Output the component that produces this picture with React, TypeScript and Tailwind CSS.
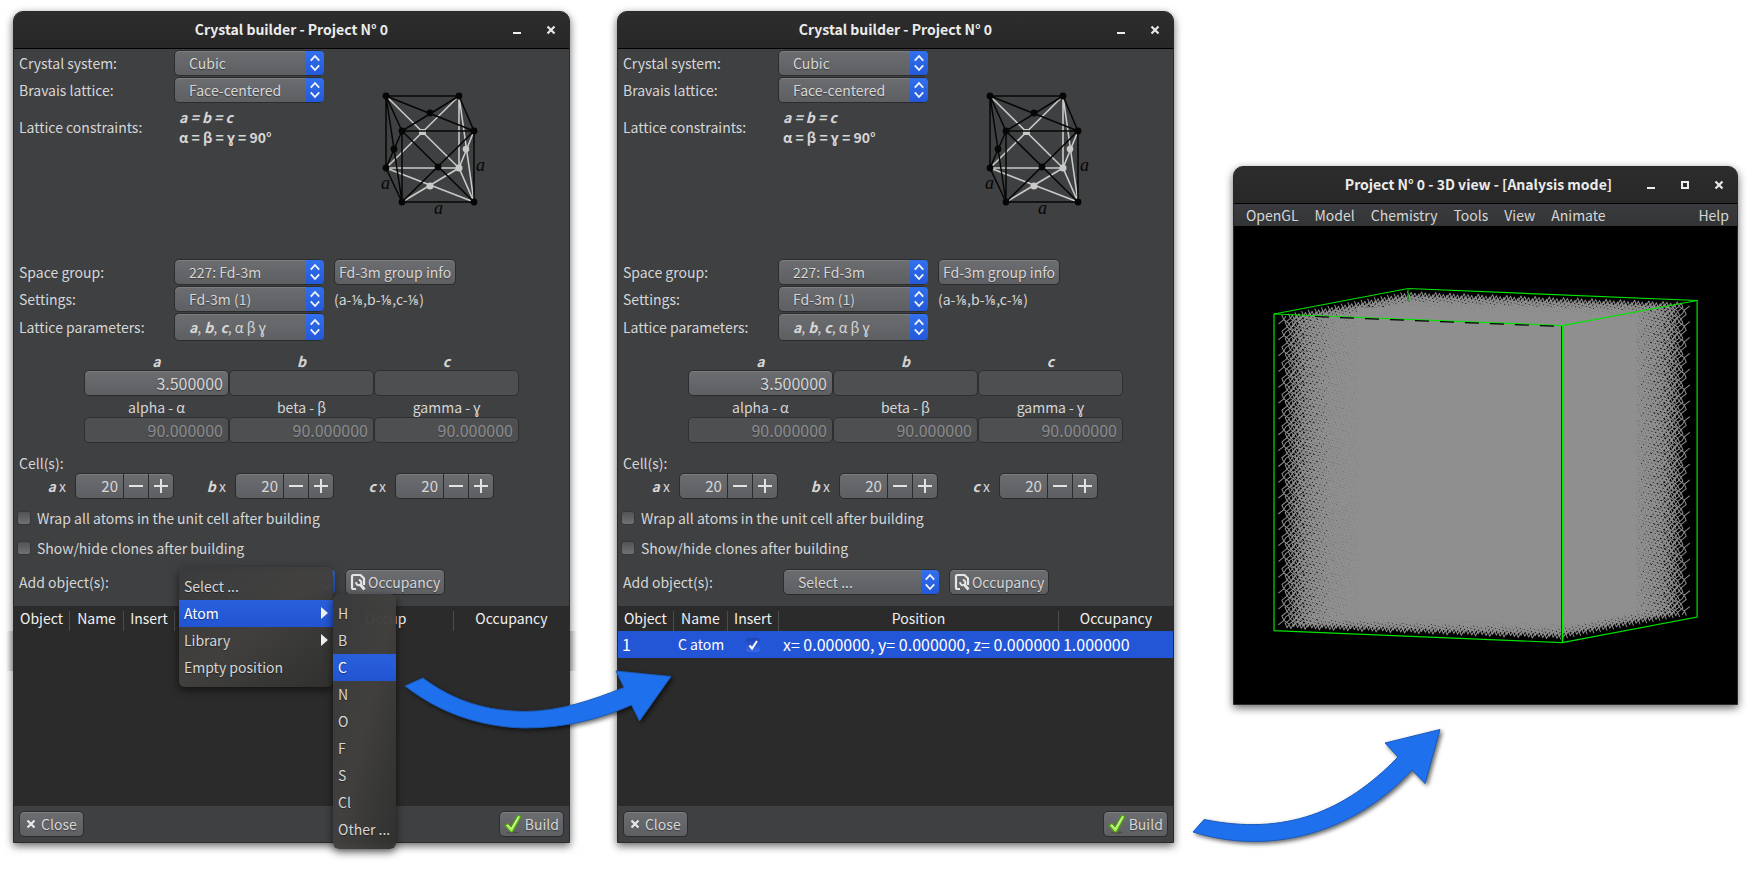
import { useMemo, type ReactNode } from 'react';
import clsx from 'clsx';

const raised =
  'border border-[#2b2c2d] bg-linear-to-b from-[#6c6d70] to-[#5e5f62] shadow-[inset_0_1px_#7d7e80] [text-shadow:0_1px_1px_#0006]';
const sunken = 'border border-[#2e2f30] bg-[#4e4f51] [text-shadow:0_1px_1px_#0004]';

function TitleBar({ title, maximize = false }: { title: string; maximize?: boolean }) {
  return (
    <header className="relative flex h-[37px] items-center justify-end rounded-t-[9px] border-b border-black bg-linear-to-b from-[#2d2d2d] to-[#272727] pr-1">
      <h1
        className={clsx(
          'absolute inset-x-0 top-[7px] text-center text-[14px] leading-5 font-bold text-[#ececec]',
          maximize && 'pr-[14px]',
        )}
      >
        {title}
      </h1>
      <div className="relative flex gap-[6px]">
        <button aria-label="Minimize" className="grid size-7 place-items-center">
          <svg width="10" height="10" viewBox="0 0 10 10">
            <path d="M1 8h8" stroke="#eee" strokeWidth="2" />
          </svg>
        </button>
        {maximize && (
          <button aria-label="Maximize" className="grid size-7 place-items-center">
            <svg width="10" height="10" viewBox="0 0 10 10">
              <path d="M2 2h6v6H2z" stroke="#eee" strokeWidth="2" fill="none" />
            </svg>
          </button>
        )}
        <button aria-label="Close window" className="grid size-7 place-items-center">
          <CrossIcon />
        </button>
      </div>
    </header>
  );
}

function CrossIcon() {
  return (
    <svg width="10" height="10" viewBox="0 0 10 10">
      <path d="M1.5 1.5l7 7M8.5 1.5l-7 7" stroke="#e8e8e8" strokeWidth="2.2" />
    </svg>
  );
}

function Combo({
  id,
  value,
  children,
  wide = false,
  tall = false,
}: {
  id: string;
  value: string;
  children?: ReactNode;
  wide?: boolean;
  tall?: boolean;
}) {
  return (
    <div className={clsx('relative shrink-0', wide ? 'w-[156px]' : 'w-[150px]', tall ? 'h-[28px]' : 'h-[26px]')}>
      <select
        id={id}
        className={clsx(
          'size-full appearance-none rounded-[5px] pb-px pl-[14px] text-[14px] leading-5 outline-none',
          raised,
          children && 'text-transparent [text-shadow:none]',
        )}
      >
        <option>{value}</option>
      </select>
      {children && (
        <span className="pointer-events-none absolute inset-0 flex items-center pl-[15px] leading-5 whitespace-pre">
          {children}
        </span>
      )}
      <span className="pointer-events-none absolute inset-y-px right-0 grid w-[18px] place-items-center rounded-r-[4px] bg-linear-to-b from-[#3270ee] to-[#2459d8]">
        <svg width="12" height="18" viewBox="0 0 12 18" fill="none" stroke="#f4f6ff" strokeWidth="1.8">
          <path d="M1.8 6.6L6 2l4.2 4.6M1.8 11.4L6 16l4.2-4.6" />
        </svg>
      </span>
    </div>
  );
}

function FieldRow({ label, htmlFor, children }: { label: string; htmlFor?: string; children: ReactNode }) {
  return (
    <div className="flex items-center pl-[5px]">
      <label htmlFor={htmlFor} className="w-[155px] shrink-0">
        {label}
      </label>
      {children}
    </div>
  );
}

function LatticeDiagram() {
  const dark = '#060606';
  const light = '#c9c9c9';
  return (
    <svg width="110" height="130" viewBox="380 90 110 130" className="mt-[41px] ml-[56px] shrink-0" role="img" aria-label="Face-centered cubic cell">
      <g stroke={light} strokeWidth="1.6" fill="none">
        <path d="M386 96L459 168M459 96L386 168M386 168H459V96M386 168L474 202M402 202L459 168L474 202M459 96L474 202M459 168L474 131" />
      </g>
      <g fill={light}>
        <rect x="419" y="129" width="7" height="6" rx="1" />
        <circle cx="459" cy="168" r="3.5" />
        <circle cx="466" cy="149" r="3.3" />
        <circle cx="430" cy="186" r="3.5" />
      </g>
      <g stroke={dark} strokeWidth="1.5" fill="none">
        <path d="M386 96H459L474 131H402ZM386 96L474 131M459 96L402 131M386 96V168L402 202V131M386 96L402 202M386 168L402 131M402 131L474 202M474 131L402 202H474V131" />
      </g>
      <g fill={dark}>
        <circle cx="386" cy="96" r="3.4" />
        <circle cx="459" cy="96" r="3.4" />
        <circle cx="430" cy="113" r="3.4" />
        <circle cx="402" cy="131" r="3.4" />
        <circle cx="474" cy="131" r="3.4" />
        <circle cx="394" cy="149" r="3.4" />
        <circle cx="438" cy="167" r="3.4" />
        <circle cx="386" cy="168" r="3.4" />
        <circle cx="402" cy="202" r="3.4" />
        <circle cx="474" cy="202" r="3.4" />
        <g fontFamily="Liberation Serif, serif" fontStyle="italic" fontSize="18">
          <text x="381" y="189">a</text>
          <text x="434" y="214">a</text>
          <text x="476" y="171">a</text>
        </g>
      </g>
    </svg>
  );
}

function Spinner({ axis, prefix }: { axis: string; prefix: string }) {
  const id = `${prefix}-cells-${axis}`;
  return (
    <div className="flex items-center">
      <label htmlFor={id} className="w-[61px] pr-[9px] text-right">
        <b className="italic">{axis}</b> x
      </label>
      <div className={clsx('flex h-[26px] w-[99px] rounded-[5px]', raised)}>
        <input
          id={id}
          defaultValue="20"
          className="w-[47px] bg-transparent pr-[5px] text-right text-[15px] leading-5 outline-none"
        />
        <button aria-label={`Fewer ${axis} cells`} className="grid w-[25px] place-items-center border-l border-[#2b2c2d]">
          <svg width="14" height="14" viewBox="0 0 14 14">
            <path d="M0 7h14" stroke="#e2e2e2" strokeWidth="2" />
          </svg>
        </button>
        <button aria-label={`More ${axis} cells`} className="grid w-[25px] place-items-center border-l border-[#2b2c2d]">
          <svg width="14" height="14" viewBox="0 0 14 14">
            <path d="M0 7h14M7 0v14" stroke="#e2e2e2" strokeWidth="2" />
          </svg>
        </button>
      </div>
    </div>
  );
}

function Tick({ id, label }: { id: string; label: string }) {
  return (
    <div className="flex h-[30px] items-center gap-[6px] pl-[3px]">
      <input
        id={id}
        type="checkbox"
        className="size-[14px] appearance-none rounded-[3px] border border-[#37383a] bg-linear-to-b from-[#525355] to-[#707173]"
      />
      <label htmlFor={id}>{label}</label>
    </div>
  );
}

function OccupancyIcon() {
  return (
    <svg width="16" height="18" viewBox="0 0 16 18" fill="none" stroke="#e6e6e6">
      <path d="M6 16H3.500Q2 16 2 14.500V3.500Q2 2 3.500 2H10.500L14 5.500V12" strokeWidth="2.200" />
      <path d="M6.200 9.200A2.600 2.600 0 1 0 8.800 7" strokeWidth="2" />
      <path d="M10.300 11.500L14.500 16.500" strokeWidth="2.800" />
    </svg>
  );
}

function CheckIcon() {
  return (
    <svg width="18" height="20" viewBox="0 0 18 20">
      <ellipse cx="9" cy="18.500" rx="6" ry="1" fill="#0003" />
      <path d="M1 11.500L4 9.500L7 13L14 1L17 2.500L8.500 18H6.500Z" fill="#a4ec55" stroke="#4f9d10" strokeWidth="1.200" strokeLinejoin="round" />
      <path d="M3 11.500L4 11L7.300 15L14.500 2.700" fill="none" stroke="#d9fbb0" strokeWidth="1" />
    </svg>
  );
}

const menuPanel =
  'absolute rounded-[6px] bg-linear-to-br from-[#393a3cf8] via-[#41403ef8] to-[#30302ff8] py-[6px] shadow-[0_3px_8px_#0009]';

function MenuItem({ children, active = false, submenu = false }: { children: ReactNode; active?: boolean; submenu?: boolean }) {
  return (
    <button
      role="menuitem"
      className={clsx(
        'flex h-[27px] w-full items-center justify-between pr-[5px] pb-[2px] pl-[5px] text-left leading-5 [text-shadow:0_1px_1px_#0006]',
        active && 'bg-linear-to-b from-[#2a60dc] to-[#2254d2] text-white',
      )}
    >
      {children}
      {submenu && (
        <svg width="7" height="12" viewBox="0 0 7 12">
          <path d="M0 0l7 6-7 6z" fill="#f0f0f0" />
        </svg>
      )}
    </button>
  );
}

function AddMenu() {
  return (
    <>
      <div role="menu" className={clsx(menuPanel, 'top-[-2px] left-[165px] w-[154px]')}>
        <MenuItem>Select ...</MenuItem>
        <MenuItem active submenu>
          Atom
        </MenuItem>
        <MenuItem submenu>Library</MenuItem>
        <MenuItem>Empty position</MenuItem>
      </div>
      <div role="menu" className={clsx(menuPanel, 'top-[25px] left-[319px] z-10 w-[63px]')}>
        {['H', 'B', 'C', 'N', 'O', 'F', 'S', 'Cl', 'Other ...'].map((name) => (
          <MenuItem key={name} active={name === 'C'}>
            <span className="whitespace-nowrap">{name}</span>
          </MenuItem>
        ))}
      </div>
    </>
  );
}

function ObjectTable({ filled }: { filled: boolean }) {
  const heads = ['Object', 'Name', 'Insert', filled ? 'Position' : 'Occup', 'Occupancy'];
  return (
    <div className="h-[200px] bg-[#2b2b2b] text-[#f0f0f0]">
      <table className="w-full table-fixed border-collapse">
        <colgroup>
          <col className="w-[56px]" />
          <col className="w-[54px]" />
          <col className="w-[51px]" />
          <col className={filled ? 'w-[280px]' : 'w-[279px]'} />
          <col />
        </colgroup>
        <thead>
          <tr>
            {heads.map((h, i) => (
              <th key={h} className="h-[25px] p-0 pt-[5px] font-normal">
                <div
                  className={clsx(
                    'h-[20px] leading-[14px]',
                    i < 4 && 'border-r border-[#4b4c50]',
                    h === 'Occup' && 'pl-[190px] text-left',
                  )}
                >
                  {h}
                </div>
              </th>
            ))}
          </tr>
        </thead>
        {filled && (
          <tbody>
            <tr className="bg-[#2356d6] whitespace-nowrap text-white">
              <td className="h-[27px] p-0 pb-[2px] pl-[4px] text-[16px] leading-5">1</td>
              <td className="p-0 pb-[2px] pl-[4px] leading-5">C atom</td>
              <td className="p-0">
                <div className="relative mx-auto size-[14px]">
                  <input
                    type="checkbox"
                    defaultChecked
                    aria-label="Insert C atom"
                    className="block size-full appearance-none rounded-[3px] bg-linear-to-b from-[#1c44b4] to-[#3a68ea]"
                  />
                  <svg className="pointer-events-none absolute inset-0" viewBox="0 0 14 14">
                    <path d="M3.500 7.500L6 10.500L11 3" fill="none" stroke="#fff" strokeWidth="2" />
                  </svg>
                </div>
              </td>
              <td className="p-0 pb-[2px] pl-[4px] text-[16px] leading-5">x= 0.000000, y= 0.000000, z= 0.000000</td>
              <td className="p-0 pb-[2px] pl-[4px] text-[16px] leading-5">1.000000</td>
            </tr>
          </tbody>
        )}
      </table>
    </div>
  );
}

function BuilderWindow({ prefix, filled = false }: { prefix: string; filled?: boolean }) {
  const lengths = [
    ['a', '3.500000'],
    ['b', ''],
    ['c', ''],
  ];
  const angles = ['alpha - α', 'beta - β', 'gamma - ɣ'];
  return (
    <section className="min-w-0 flex-[557] rounded-t-[10px] border border-[#2a2a2a] bg-[#3f4042] shadow-[0_3px_9px_#0009]">
      <TitleBar title="Crystal builder - Project N° 0" />
      <div className="flex">
        <div className="flex flex-col gap-px pt-px">
          <FieldRow label="Crystal system:" htmlFor={`${prefix}-system`}>
            <Combo id={`${prefix}-system`} value="Cubic" />
          </FieldRow>
          <FieldRow label="Bravais lattice:" htmlFor={`${prefix}-lattice`}>
            <Combo id={`${prefix}-lattice`} value="Face-centered" />
          </FieldRow>
          <div className="flex items-center pt-[3px] pl-[5px]">
            <span className="w-[160px]">Lattice constraints:</span>
            <div className="leading-5 font-bold">
              <p className="italic">a = b = c</p>
              <p>α = β = ɣ = 90°</p>
            </div>
          </div>
        </div>
        <LatticeDiagram />
      </div>

      <div className="mt-[39px] flex flex-col gap-px">
        <FieldRow label="Space group:" htmlFor={`${prefix}-group`}>
          <Combo id={`${prefix}-group`} value="227: Fd-3m" />
          <button className={clsx('ml-[10px] h-[26px] rounded-[5px] px-[4px] leading-5', raised)}>Fd-3m group info</button>
        </FieldRow>
        <FieldRow label="Settings:" htmlFor={`${prefix}-settings`}>
          <Combo id={`${prefix}-settings`} value="Fd-3m (1)" />
          <span className="ml-[10px]">(a-⅛,b-⅛,c-⅛)</span>
        </FieldRow>
        <FieldRow label="Lattice parameters:" htmlFor={`${prefix}-params`}>
          <Combo id={`${prefix}-params`} value="a, b, c, α β ɣ" tall>
            <b className="italic">a</b>, <b className="italic">b</b>, <b className="italic">c</b>, α β ɣ
          </Combo>
        </FieldRow>
      </div>

      <div className="mt-[10px] ml-[70px] grid w-[435px] grid-cols-3 text-center">
        {lengths.map(([name, value]) => (
          <div key={name}>
            <label htmlFor={`${prefix}-${name}`} className="block h-[19px] leading-5 font-bold italic">
              {name}
            </label>
            <input
              id={`${prefix}-${name}`}
              defaultValue={value}
              disabled={!value}
              className={clsx(
                'block h-[26px] w-full rounded-[5px] px-[5px] text-right text-[16px] leading-5 outline-none',
                value ? raised : sunken,
              )}
            />
          </div>
        ))}
        {angles.map((name) => (
          <div key={name}>
            <label htmlFor={`${prefix}-${name}`} className="block h-[21px] leading-[22px]">
              {name}
            </label>
            <input
              id={`${prefix}-${name}`}
              defaultValue="90.000000"
              disabled
              className={clsx(
                'block h-[26px] w-full rounded-[5px] px-[5px] text-right text-[16px] leading-5 text-[#8b8c8e]',
                sunken,
              )}
            />
          </div>
        ))}
      </div>

      <p className="mt-[10px] pl-[5px] leading-5">Cell(s):</p>
      <div className="flex">
        <Spinner axis="a" prefix={prefix} />
        <Spinner axis="b" prefix={prefix} />
        <Spinner axis="c" prefix={prefix} />
      </div>
      <div className="mt-1">
        <Tick id={`${prefix}-wrap`} label="Wrap all atoms in the unit cell after building" />
        <Tick id={`${prefix}-clones`} label="Show/hide clones after building" />
      </div>

      <div className="relative mt-[6px] mb-[11px] flex items-center pl-[5px]">
        <label htmlFor={`${prefix}-add`} className="w-[160px]">
          Add object(s):
        </label>
        <Combo id={`${prefix}-add`} value="Select ..." wide />
        <button className={clsx('ml-[10px] flex h-[26px] items-center gap-[2px] rounded-[5px] px-[4px] leading-5', raised)}>
          <OccupancyIcon />
          Occupancy
        </button>
        {!filled && <AddMenu />}
      </div>

      <ObjectTable filled={filled} />

      <footer className="flex h-[36px] items-center justify-between px-[5px]">
        <button className={clsx('flex h-[26px] items-center gap-[5px] rounded-[5px] px-[6px] leading-5', raised)}>
          <CrossIcon />
          Close
        </button>
        <button className={clsx('flex h-[26px] items-center gap-[3px] rounded-[5px] px-[4px] leading-5', raised)}>
          <CheckIcon />
          Build
        </button>
      </footer>
    </section>
  );
}

const CELLS = 20;
const FCC = [
  [0, 0, 0],
  [0, 0.5, 0.5],
  [0.5, 0, 0.5],
  [0.5, 0.5, 0],
];
const BONDS = [
  [1, 1, 1],
  [1, -1, -1],
  [-1, 1, -1],
  [-1, -1, 1],
];

const tenth = (n: number) => Math.round(n * 10) / 10;

function project(x: number, y: number, z: number): [number, number] {
  return [
    tenth(1276 + (x * 284 + y * 132) / CELLS),
    tenth(314 + (x * 11 - y * 25 + z * 316.5) / CELLS),
  ];
}

function insideCore(x: number, y: number) {
  if (x < 1362 || x > 1632) return false;
  const top = 288 + (x - 1408) * 0.042 + 22;
  const bottom = x < 1562 ? 630 + (x - 1274) * 0.038 - 20 : 642 - (x - 1562) * 0.185 - 20;
  return y > top && y < bottom;
}

function buildBondPath() {
  const parts: string[] = [];
  for (let i = 0; i < CELLS; i++)
    for (let j = 0; j < CELLS; j++)
      for (let k = 0; k < CELLS; k++)
        for (const [fx, fy, fz] of FCC) {
          const cx = i + fx + 0.375;
          const cy = j + fy + 0.375;
          const cz = k + fz + 0.375;
          const [px, py] = project(cx, cy, cz);
          if (insideCore(px, py)) continue;
          for (const [bx, by, bz] of BONDS) {
            const nx = cx + bx / 4;
            const ny = cy + by / 4;
            const nz = cz + bz / 4;
            if (Math.max(nx, ny, nz) > CELLS) continue;
            const [qx, qy] = project(nx, ny, nz);
            parts.push(`M${px} ${py}L${qx} ${qy}`);
          }
        }
  return parts.join('');
}

function CrystalView() {
  const bonds = useMemo(buildBondPath, []);
  return (
    <svg viewBox="1234 226 503 478" className="block w-full bg-black" role="img" aria-label="3D view of the crystal">
      <path d="M1358 308L1408 306L1636 316V612L1562 624L1358 616Z" fill="#8f8f8f" />
      <path d={bonds} stroke="#8f8f8f" strokeWidth="1" strokeLinecap="round" fill="none" />
      <g fill="none" stroke="#00e400" strokeWidth="1.200">
        <path d="M1274 314L1408 288.500L1697 300.500V617L1562 642.500L1274 630.500Z" />
        <path d="M1408 288V301" stroke="#00a000" />
        <path d="M1274 314L1562 325.500L1697 300.500" />
        <path d="M1315 316.500L1562 326.500" stroke="#000" strokeDasharray="14 11" />
        <path d="M1561.500 326V641" stroke="#111" strokeWidth="1" />
        <path d="M1562.500 325V642" strokeWidth="1.500" stroke="#00f000" />
      </g>
    </svg>
  );
}

function ViewerWindow() {
  return (
    <section className="mt-[155px] min-w-0 flex-[505] rounded-t-[10px] border border-[#2a2a2a] bg-[#3f4042] shadow-[0_3px_9px_#0009]">
      <TitleBar title="Project N° 0 - 3D view - [Analysis mode]" maximize />
      <nav className="flex h-[22px] items-center gap-4 bg-linear-to-b from-[#3a3b3e] to-[#333436] pr-[8px] pb-px pl-[12px] leading-5">
        {['OpenGL', 'Model', 'Chemistry', 'Tools', 'View', 'Animate'].map((m) => (
          <button key={m}>{m}</button>
        ))}
        <button className="ml-auto">Help</button>
      </nav>
      <CrystalView />
    </section>
  );
}

function Arrows() {
  return (
    <svg className="pointer-events-none absolute top-0 left-0 w-full" viewBox="0 0 1751 892" aria-hidden="true">
      <defs>
        <linearGradient id="edge-left">
          <stop offset="0" stopColor="#000" stopOpacity="0" />
          <stop offset="1" stopColor="#000" stopOpacity="0.2" />
        </linearGradient>
        <linearGradient id="edge-right">
          <stop offset="0" stopColor="#000" stopOpacity="0.2" />
          <stop offset="1" stopColor="#000" stopOpacity="0" />
        </linearGradient>
      </defs>
      <rect x="6" y="631" width="7" height="40" fill="url(#edge-left)" />
      <rect x="570" y="631" width="7" height="40" fill="url(#edge-right)" />
      <g fill="#1f70ec" stroke="#1a5bbd" strokeWidth="1" className="[filter:drop-shadow(2px_2px_2px_#0009)]">
        <path d="M405 686L423 678C455 702 488 711 525 711.500C560 711 590 701 624 687.500L616 671L671 676.500L639.500 721L631.500 705C600 719 565 728 525 728C480 727 440 713 405 686Z" />
        <path d="M1193 832L1204 819.500C1285 836 1345 812 1398 757L1385 743L1440 729.500L1425 783.500L1412 770C1362 825 1280 859 1193 832Z" />
      </g>
    </svg>
  );
}

export default function App() {
  return (
    <main className="relative flex min-h-screen items-start bg-white px-[13px] pt-[11px] pb-12 font-['Noto_Sans_CJK_SC','Noto_Sans',sans-serif] text-[14px] leading-5 text-[#d6d6d6]">
      <BuilderWindow prefix="left" />
      <div className="w-[47px] shrink-0" />
      <BuilderWindow prefix="right" filled />
      <div className="w-[59px] shrink-0" />
      <ViewerWindow />
      <Arrows />
    </main>
  );
}
